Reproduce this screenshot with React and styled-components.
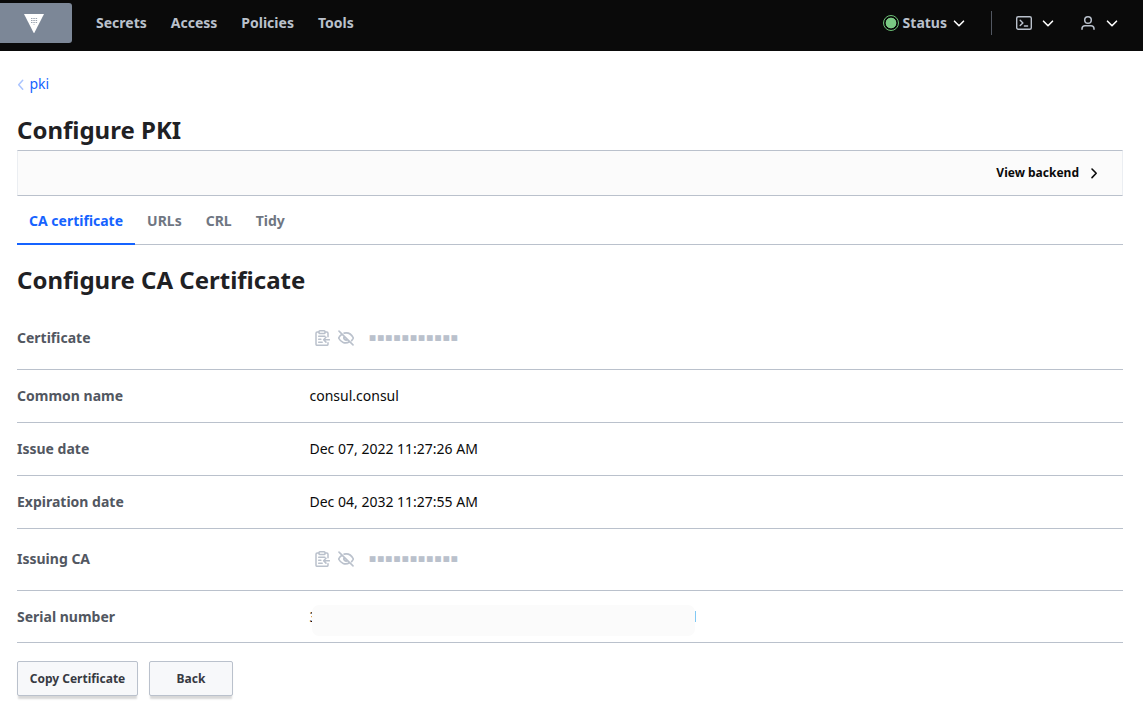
import React from 'react';
import styled, { createGlobalStyle, css } from 'styled-components';

const Global = createGlobalStyle`
  *, *::before, *::after { box-sizing: border-box; }
  body { margin: 0; background: #fff; color: #0a0a0a; font: 14px/21px "Noto Sans", sans-serif; }
  h1, h2 { margin: 0; color: #1f2124; font-size: 24px; line-height: 30px; font-weight: 700; }
  button { font-family: inherit; }
  svg { display: block; flex: none; }
`;

const NavBar = styled.header`
  display: flex;
  justify-content: space-between;
  height: 51px;
  padding: 3px 23px 8px 0;
  background: #0a0a0a;
  color: #bac1cc;
  font-weight: 700;
`;
const NavGroup = styled.nav`
  display: flex;
  align-items: center;
`;
const Home = styled.a`
  display: flex;
  align-items: center;
  width: 72px;
  height: 40px;
  margin-right: 12px;
  padding-left: 24px;
  background: #7c8797;
  border-radius: 0 3px 3px 0;
`;
const NavLink = styled.a`
  padding: 0 12px 1px;
`;
const NavText = styled.span`
  padding-bottom: 1px;
`;
const NavMenu = styled.div`
  display: flex;
  align-items: center;
  gap: ${(p) => p.$gap || 8}px;
  margin-left: ${(p) => p.$left || 0}px;
`;
const StatusDot = styled.span`
  width: 16px;
  height: 16px;
  border: 1px solid #6cc076;
  border-radius: 50%;
  background: radial-gradient(circle, #7bca84 5px, #0a0a0a 5.7px);
`;
const NavDivider = styled.span`
  width: 1px;
  height: 24px;
  margin-left: 24px;
  background: #525761;
`;

const Page = styled.main`
  min-height: 654px;
  padding: 22px 20px 0 17px;
`;
const Breadcrumb = styled.a`
  display: flex;
  align-items: center;
  gap: 4.5px;
  height: 21px;
  margin-bottom: 21px;
  color: #1563ff;
`;
const Toolbar = styled.div`
  display: flex;
  align-items: center;
  justify-content: flex-end;
  height: 46px;
  margin-top: 5px;
  padding-right: 23px;
  background: #fbfbfb;
  border: 1px solid #bac1cc;
  border-left-color: #ebeef2;
  border-right-color: #ebeef2;
`;
const ToolbarLink = styled.a`
  display: flex;
  align-items: center;
  gap: 10px;
  padding-bottom: 1px;
  font-size: 12px;
  font-weight: 700;
`;
const Tabs = styled.nav`
  display: flex;
  height: 49px;
  margin-bottom: 20px;
  box-shadow: inset 0 -1px #bac1cc;
`;
const Tab = styled.a`
  padding: 14px 12px 0;
  color: #6f7682;
  font-weight: 700;
  ${(p) => p.$active && css`
    color: #1563ff;
    border-bottom: 2px solid #1563ff;
  `}
`;
const Details = styled.dl`
  margin: 12px 0 18px;
`;
const Row = styled.div`
  display: flex;
  align-items: center;
  height: ${(p) => p.$height}px;
  padding-bottom: ${(p) => p.$bottom ?? 1}px;
  border-bottom: 1px solid #bac1cc;
`;
const Label = styled.dt`
  width: 292.5px;
  color: #525761;
  font-weight: 700;
`;
const Value = styled.dd`
  display: flex;
  align-items: center;
  margin: 0;
`;
const MaskedValue = styled.div`
  display: flex;
  align-items: center;
  gap: 8px;
  padding-left: 4.5px;
`;
const Mask = styled.span`
  margin-left: 7px;
  color: #bac1cc;
  font: 7.5px/16px "DejaVu Sans", sans-serif;
  letter-spacing: 1.1px;
`;
const Redacted = styled.div`
  position: relative;
  display: flex;
  align-items: center;
  width: 386px;
`;
const Cover = styled.span`
  position: absolute;
  left: 2.5px;
  top: -1px;
  width: 383px;
  height: 31px;
  border-radius: 7px;
  background: #fbfbfb;
`;
const Edge = styled.span`
  width: 1px;
  height: 11px;
  margin-left: auto;
  background: #82c9f4;
`;
const Actions = styled.div`
  display: flex;
  gap: 11px;
`;
const Button = styled.button`
  width: ${(p) => p.$width}px;
  height: 35px;
  padding: 0 0 1px;
  color: #373a42;
  background: #f7f8fa;
  border: 1px solid #bac1cc;
  border-radius: 2px;
  box-shadow: 0 4px 2px -1px rgba(10, 10, 10, 0.16);
  font-size: 12px;
  font-weight: 700;
`;

const Chevron = ({ d = 'M3.5 6.2 8 10.7l4.5-4.5', color = '#fff', width = 1.6, size = 16 }) => (
  <svg width={size} height="16" viewBox={`0 0 ${size} 16`} fill="none" stroke={color} strokeWidth={width} strokeLinecap="round" strokeLinejoin="round">
    <path d={d} />
  </svg>
);

const Logo = () => (
  <svg width="20" height="20" viewBox="0 0 20 20">
    <path d="M0 1h20L10 20.5z" fill="#fff" />
    <g fill="#7c8797" opacity=".75">
      {[5, 7, 9].map((y) => [7, 9.3, 11.6].map((x) => <rect key={`${x}-${y}`} x={x} y={y} width="1.5" height="1" />))}
      <rect x="9.3" y="11" width="1.5" height="1" opacity=".5" />
    </g>
  </svg>
);

const ConsoleIcon = () => (
  <svg width="16" height="16" viewBox="0 0 16 16" fill="none" stroke="#bac1cc" strokeWidth="1.4" strokeLinecap="round" strokeLinejoin="round">
    <rect x=".7" y="1.7" width="14.6" height="12.6" rx="1.5" />
    <path d="m4.2 5.2 2.7 2.7-2.7 2.7M8.4 11h3.2" />
  </svg>
);

const UserIcon = () => (
  <svg width="16" height="16" viewBox="0 0 16 16" fill="none" stroke="#bac1cc" strokeWidth="1.5" strokeLinecap="round">
    <circle cx="8" cy="5" r="3.3" />
    <path d="M2 14.3v-.7a3 3 0 0 1 3-2.9h6a3 3 0 0 1 3 2.9v.7" />
  </svg>
);

const CopyIcon = () => (
  <svg width="16" height="16" viewBox="0 0 16 16" fill="none" stroke="#bac1cc" strokeWidth="1.5" strokeLinecap="round" strokeLinejoin="round">
    <path d="M4.8 2H3.2C2.5 2 2 2.5 2 3.2v11c0 .6.5 1.1 1.2 1.1h9.6c.7 0 1.2-.5 1.2-1.1v-1.5M11.2 2h1.6c.7 0 1.2.5 1.2 1.2v3.5" />
    <rect x="5" y=".8" width="6" height="2.7" rx=".8" />
    <path d="M4.7 6.2h6.2M4.7 9.2h2.2M4.7 12.2h3.5M15.4 9.7H9.8M12 7.3 9.6 9.7l2.4 2.4" />
  </svg>
);

const EyeOffIcon = () => (
  <svg width="16" height="16" viewBox="0 0 16 16" fill="none" stroke="#bac1cc" strokeWidth="1.6" strokeLinecap="round" strokeLinejoin="round">
    <path d="M6.1 3.1C11 2 14 5.2 15.4 8c-.5 1-1.1 1.9-1.8 2.6M3.7 4.5C2.3 5.4 1.3 6.7.6 8c2.1 4.2 6.4 6.3 11 3.7M6.3 6.5a2.3 2.3 0 0 0 3.2 3.2M1 1.1l14 13.8" />
  </svg>
);

const Masked = () => (
  <MaskedValue>
    <CopyIcon />
    <EyeOffIcon />
    <Mask>■■■■■■■■■■■</Mask>
  </MaskedValue>
);

const fields = [
  { label: 'Certificate', value: <Masked />, height: 63 },
  { label: 'Common name', value: 'consul.consul', height: 53 },
  { label: 'Issue date', value: 'Dec 07, 2022 11:27:26 AM', height: 53 },
  { label: 'Expiration date', value: 'Dec 04, 2032 11:27:55 AM', height: 53 },
  { label: 'Issuing CA', value: <Masked />, height: 62, bottom: 2 },
  { label: 'Serial number', value: <Redacted>3<Cover /><Edge /></Redacted>, height: 52, bottom: 0 },
];

export default function App() {
  return (
    <>
      <Global />
      <NavBar>
        <NavGroup>
          <Home><Logo /></Home>
          {['Secrets', 'Access', 'Policies', 'Tools'].map((name) => <NavLink key={name}>{name}</NavLink>)}
        </NavGroup>
        <NavGroup>
          <NavMenu $gap={4}><StatusDot /><NavText>Status</NavText><Chevron /></NavMenu>
          <NavDivider />
          <NavMenu $left={24}><ConsoleIcon /><Chevron /></NavMenu>
          <NavMenu $left={24}><UserIcon /><Chevron /></NavMenu>
        </NavGroup>
      </NavBar>
      <Page>
        <Breadcrumb>
          <Chevron size={8} d="M5.7 4.3 1.7 8.8l4 4.5" color="#aac4ff" width={1.5} />pki
        </Breadcrumb>
        <h1>Configure PKI</h1>
        <Toolbar>
          <ToolbarLink>View backend<Chevron size={10} d="m3 4 4.2 4.3L3 12.6" color="#0a0a0a" /></ToolbarLink>
        </Toolbar>
        <Tabs>
          <Tab $active>CA certificate</Tab>
          <Tab>URLs</Tab>
          <Tab>CRL</Tab>
          <Tab>Tidy</Tab>
        </Tabs>
        <h2>Configure CA Certificate</h2>
        <Details>
          {fields.map(({ label, value, height, bottom }) => (
            <Row key={label} $height={height} $bottom={bottom}>
              <Label>{label}</Label>
              <Value>{value}</Value>
            </Row>
          ))}
        </Details>
        <Actions>
          <Button $width={121}>Copy Certificate</Button>
          <Button $width={84}>Back</Button>
        </Actions>
      </Page>
    </>
  );
}
